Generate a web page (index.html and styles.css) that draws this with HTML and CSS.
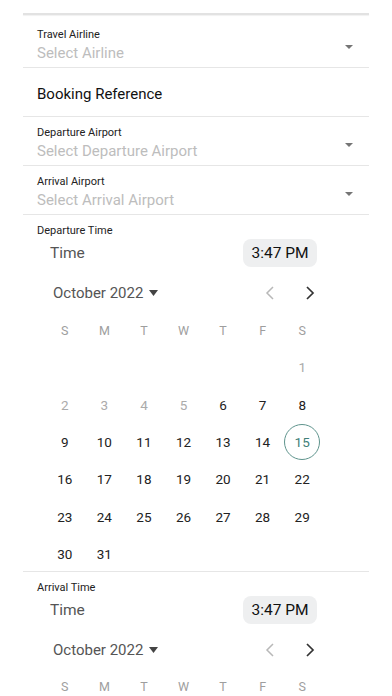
FILE: index.html
```html
<!DOCTYPE html>
<html>
<head>
<meta charset="utf-8">
<link rel="stylesheet" href="styles.css">
</head>
<body>
<div class="page">
  <div class="topbar"></div>

  <div class="field select first">
    <div class="field-text">
      <div class="label">Travel Airline</div>
      <div class="placeholder">Select Airline</div>
    </div>
    <svg class="caret" width="8" height="4" viewBox="0 0 8 4"><path d="M0 0H8L4 4Z" fill="#757575"/></svg>
  </div>

  <div class="field plain">
    <div class="value">Booking Reference</div>
  </div>

  <div class="field select">
    <div class="field-text">
      <div class="label">Departure Airport</div>
      <div class="placeholder">Select Departure Airport</div>
    </div>
    <svg class="caret" width="8" height="4" viewBox="0 0 8 4"><path d="M0 0H8L4 4Z" fill="#757575"/></svg>
  </div>

  <div class="field select">
    <div class="field-text">
      <div class="label">Arrival Airport</div>
      <div class="placeholder">Select Arrival Airport</div>
    </div>
    <svg class="caret" width="8" height="4" viewBox="0 0 8 4"><path d="M0 0H8L4 4Z" fill="#757575"/></svg>
  </div>

  <div class="section">
    <div class="label">Departure Time</div>
    <div class="picker">
      <div class="time-row">
        <span class="time-label">Time</span>
        <span class="pill">3:47 PM</span>
      </div>
      <div class="cal-head">
        <span class="month">October 2022
          <svg class="month-caret" width="9" height="6" viewBox="0 0 9 6"><path d="M0 0H9L4.5 6Z" fill="#444"/></svg>
        </span>
        <span class="navs">
          <svg class="nav" width="20" height="20" viewBox="0 0 20 20"><path d="M13 4L7 10L13 16" fill="none" stroke="#b8b8b8" stroke-width="1.5"/></svg>
          <svg class="nav" width="20" height="20" viewBox="0 0 20 20"><path d="M7 4L13 10L7 16" fill="none" stroke="#333" stroke-width="1.7"/></svg>
        </span>
      </div>
      <div class="grid">
        <span class="wd">S</span><span class="wd">M</span><span class="wd">T</span><span class="wd">W</span><span class="wd">T</span><span class="wd">F</span><span class="wd">S</span>
        <span></span><span></span><span></span><span></span><span></span><span></span><span class="d dim">1</span>
        <span class="d dim">2</span><span class="d dim">3</span><span class="d dim">4</span><span class="d dim">5</span><span class="d">6</span><span class="d">7</span><span class="d">8</span>
        <span class="d">9</span><span class="d">10</span><span class="d">11</span><span class="d">12</span><span class="d">13</span><span class="d">14</span><span class="d sel"><span class="ring">15</span></span>
        <span class="d">16</span><span class="d">17</span><span class="d">18</span><span class="d">19</span><span class="d">20</span><span class="d">21</span><span class="d">22</span>
        <span class="d">23</span><span class="d">24</span><span class="d">25</span><span class="d">26</span><span class="d">27</span><span class="d">28</span><span class="d">29</span>
        <span class="d">30</span><span class="d">31</span>
      </div>
    </div>
  </div>

  <div class="section last">
    <div class="label">Arrival Time</div>
    <div class="picker">
      <div class="time-row">
        <span class="time-label">Time</span>
        <span class="pill">3:47 PM</span>
      </div>
      <div class="cal-head">
        <span class="month">October 2022
          <svg class="month-caret" width="9" height="6" viewBox="0 0 9 6"><path d="M0 0H9L4.5 6Z" fill="#444"/></svg>
        </span>
        <span class="navs">
          <svg class="nav" width="20" height="20" viewBox="0 0 20 20"><path d="M13 4L7 10L13 16" fill="none" stroke="#b8b8b8" stroke-width="1.5"/></svg>
          <svg class="nav" width="20" height="20" viewBox="0 0 20 20"><path d="M7 4L13 10L7 16" fill="none" stroke="#333" stroke-width="1.7"/></svg>
        </span>
      </div>
      <div class="grid">
        <span class="wd">S</span><span class="wd">M</span><span class="wd">T</span><span class="wd">W</span><span class="wd">T</span><span class="wd">F</span><span class="wd">S</span>
      </div>
    </div>
  </div>
</div>
</body>
</html>
```

FILE: styles.css
```css
* { box-sizing: border-box; }
html, body { margin: 0; padding: 0; background: #fff; }
body {
  font-family: Roboto, "Liberation Sans", sans-serif;
  color: #111;
  overflow: hidden;
  height: 696px;
}
.page {
  margin: 0 23px;
  width: 346px;
}
.topbar {
  margin-top: 13px;
  height: 2px;
  background: #e2e2e2;
  box-shadow: 0 1px 1px rgba(0,0,0,0.06);
}
.field {
  border-bottom: 1px solid #e6e6e6;
  padding-left: 14px;
  padding-right: 16px;
}
.select {
  display: flex;
  align-items: center;
  justify-content: space-between;
  height: 49px;
  padding-top: 9px;
  padding-bottom: 4px;
}
.select.first {
  height: 53px;
  padding-top: 13px;
}
.field-text { display: flex; flex-direction: column; }
.caret { margin-top: 3px; }
.label {
  font-size: 11px;
  line-height: 14px;
  color: #222;
}
.placeholder {
  margin-top: 1px;
  font-size: 15px;
  line-height: 20px;
  color: #bdbdbd;
}
.plain {
  height: 49px;
  padding-top: 16px;
}
.value {
  font-size: 15px;
  line-height: 20px;
  color: #111;
}
.section {
  padding-top: 9px;
  padding-left: 14px;
  border-bottom: 1px solid #e6e6e6;
}
.section.last { border-bottom: none; }
.picker {
  margin-left: 8px;
  width: 277px;
}
.time-row {
  margin-top: 1px;
  height: 28px;
  display: flex;
  align-items: center;
  justify-content: space-between;
  padding: 0 5px;
}
.time-label {
  font-size: 15.5px;
  color: #555;
}
.pill {
  background: #eeeff0;
  border-radius: 8px;
  height: 28px;
  width: 74px;
  display: flex;
  align-items: center;
  justify-content: center;
  font-size: 15.5px;
  color: #111;
}
.cal-head {
  margin-top: 14px;
  height: 24px;
  display: flex;
  align-items: center;
  justify-content: space-between;
  padding-left: 8px;
  padding-right: 2px;
}
.month {
  font-size: 15px;
  color: #555;
  display: flex;
  align-items: center;
  gap: 6px;
}
.navs { display: flex; gap: 20px; align-items: center; }
.nav { display: block; }
.grid {
  margin-top: 8px;
  display: grid;
  grid-template-columns: repeat(7, 1fr);
  grid-auto-rows: 34px;
  row-gap: 3.33px;
}
.grid > span {
  display: flex;
  align-items: center;
  justify-content: center;
}
.wd {
  font-size: 12.5px;
  color: #9e9e9e;
}
.d {
  font-size: 13.5px;
  color: #222;
}
.d.dim { color: #ababab; }
.ring {
  width: 36px;
  height: 36px;
  flex: none;
  border: 1px solid #5f948d;
  border-radius: 50%;
  display: flex;
  align-items: center;
  justify-content: center;
  color: #3f7f79;
}
```
